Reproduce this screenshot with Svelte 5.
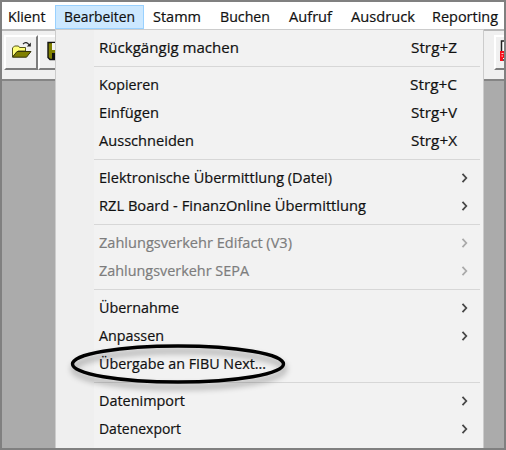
<script>
  const menus = [
    { label: 'Klient', box: 53, x: 6, w: 37.5 },
    { label: 'Bearbeiten', box: 89, x: 9, w: 71, active: true },
    { label: 'Stamm', box: 67, x: 9, w: 48 },
    { label: 'Buchen', box: 69, x: 9, w: 50 },
    { label: 'Aufruf', box: 62, x: 9, w: 43 },
    { label: 'Ausdruck', box: 82, x: 8.5, w: 64 },
    { label: 'Reporting', box: 80, x: 8, w: 66 }
  ];
  const groups = [
    [{ label: 'Rückgängig machen', w: 140, key: 'Strg+Z', kw: 46 }],
    [
      { label: 'Kopieren', w: 60, key: 'Strg+C', kw: 47 },
      { label: 'Einfügen', w: 60, key: 'Strg+V', kw: 46 },
      { label: 'Ausschneiden', w: 95, key: 'Strg+X', kw: 46 }
    ],
    [
      { label: 'Elektronische Übermittlung (Datei)', w: 233, sub: true },
      { label: 'RZL Board - FinanzOnline Übermittlung', w: 267, sub: true }
    ],
    [
      { label: 'Zahlungsverkehr Edifact (V3)', w: 193, sub: true, off: true },
      { label: 'Zahlungsverkehr SEPA', w: 150, sub: true, off: true }
    ],
    [
      { label: 'Übernahme', w: 80, sub: true },
      { label: 'Anpassen', w: 65, sub: true },
      { label: 'Übergabe an FIBU Next...', w: 167, marked: true }
    ],
    [
      { label: 'Datenimport', w: 86, sub: true },
      { label: 'Datenexport', w: 82, sub: true }
    ]
  ];
</script>

{#snippet fitted(text, w)}
  <svg class="label" width={w} height="24"><text x="0" y="17" textLength={w} lengthAdjust="spacingAndGlyphs">{text}</text></svg>
{/snippet}

<div class="window">
  <nav>
    {#each menus as m}
      <div class="top" class:active={m.active} style="width:{m.box}px;padding-left:{m.x}px">
        {@render fitted(m.label, m.w)}
      </div>
    {/each}
  </nav>
  <div class="toolbar">
    <div class="tool open">
      <svg width="22" height="20" viewBox="0 0 22 20">
        <path d="M1.5 17V8l2-2h4l1 1.5h6v3.5H7z" fill="#ffff7a" stroke="#55551c" />
        <path d="M1.5 17.2 6 11.5h14l-4.5 5.7z" fill="#808000" stroke="#34340a" />
        <path d="M12 4.2c2-2.4 4.5-1.8 6 .6" fill="none" stroke="#222" stroke-width="1.2" />
        <path d="M19.8 2.4v4h-4z" fill="#222" />
      </svg>
    </div>
    <div class="tool save">
      <svg width="20" height="20" viewBox="0 0 20 20">
        <path d="M1 1.5h17v17H3l-2-2z" fill="#808000" stroke="#111" stroke-width="1.4" />
        <path d="M5 2h10v7H5z" fill="#f4f4f4" />
        <path d="M5 12h10v6H5z" fill="#111" />
      </svg>
    </div>
    <div class="tool report">
      <svg width="14" height="22" viewBox="0 0 14 22">
        <path d="M1.5 1h12v19h-12z" fill="#fff" stroke="#222" stroke-width="1.5" />
        <path d="M0 11h14v7H3v3H0z" fill="#f5101c" />
        <path d="M1.5 13.5h2M1.5 16h1.5" fill="none" stroke="#fff" stroke-width=".8" />
      </svg>
    </div>
  </div>

  <div class="menu">
    {#each groups as group, i}
      {#if i}<div class="sep"></div>{/if}
      {#each group as item}
        <div class="row" class:off={item.off}>
          {@render fitted(item.label, item.w)}
          {#if item.key}
            <span class="key">{@render fitted(item.key, item.kw)}</span>
          {/if}
          {#if item.sub}
            <svg class="chev" width="8" height="12" viewBox="0 0 8 12"><path d="M1.5 1.8 5.3 6 1.5 10.2" /></svg>
          {/if}
          {#if item.marked}
            <svg class="ring" width="226" height="54" viewBox="0 0 226 54">
              <ellipse cx="110" cy="22" rx="105.5" ry="18" />
            </svg>
          {/if}
        </div>
      {/each}
    {/each}
  </div>
</div>

<style>
  .window {
    position: relative;
    box-sizing: border-box;
    width: 506px;
    height: 450px;
    border: 2px solid #808080;
    background: #ababab;
    overflow: hidden;
    font: 14.8px 'Open Sans', 'Noto Sans', sans-serif;
  }
  nav {
    display: flex;
    box-sizing: border-box;
    width: 504px;
    height: 27px;
    padding-top: 3px;
    background: #fff;
  }
  .top {
    box-sizing: border-box;
    flex: none;
    height: 24px;
  }
  .active {
    background: #cce8ff;
    box-shadow: inset 0 0 0 1px #99d1ff;
  }
  .label {
    display: block;
    flex: none;
    overflow: visible;
    fill: #111;
    stroke: #111;
    stroke-width: 0.2;
  }
  .toolbar {
    display: flex;
    box-sizing: border-box;
    height: 52px;
    padding-top: 4px;
    background: #f0f0f0;
    border-top: 2px solid #b8b8b8;
    border-bottom: 2px solid #858585;
  }
  .tool {
    flex: none;
    box-sizing: border-box;
    width: 34px;
    height: 35px;
    border: 2px solid #fff;
    border-right-color: #7d7d7d;
    border-bottom-color: #7d7d7d;
    background: #f0f0f0;
  }
  .tool svg { display: block; }
  .open { margin-left: 2px; padding: 3px 0 0 5px; }
  .save { padding: 4px 0 0 7px; }
  .report { margin-left: 422px; padding: 3px 0 0 4px; }
  .menu {
    position: absolute;
    left: 53px;
    top: 27px;
    box-sizing: border-box;
    width: 429px;
    height: 421px;
    padding-top: 3.6px;
    border: 1px solid #ccc;
    border-bottom: 0;
    background: linear-gradient(90deg, #efefef 38px, #f2f2f2 38px);
  }
  .row {
    position: relative;
    display: flex;
    align-items: center;
    box-sizing: border-box;
    height: 28.05px;
    padding: 0 14px 0 43px;
  }
  .key { margin: 0 12px 0 auto; }
  .chev {
    margin-left: auto;
    fill: none;
    stroke: #484848;
    stroke-width: 1.8;
  }
  .off .label { fill: #7d7d7d; stroke: #7d7d7d; }
  .off .chev { stroke: #aaa; }
  .sep {
    height: 1px;
    margin: 4px 3px 4px 38px;
    background: #d7d7d7;
  }
  .ring {
    position: absolute;
    left: 12px;
    top: -7.7px;
    overflow: visible;
    fill: none;
    stroke: #000;
    stroke-width: 3.4;
    filter: drop-shadow(1px 5px 3px rgba(0, 0, 0, 0.4));
  }
</style>
